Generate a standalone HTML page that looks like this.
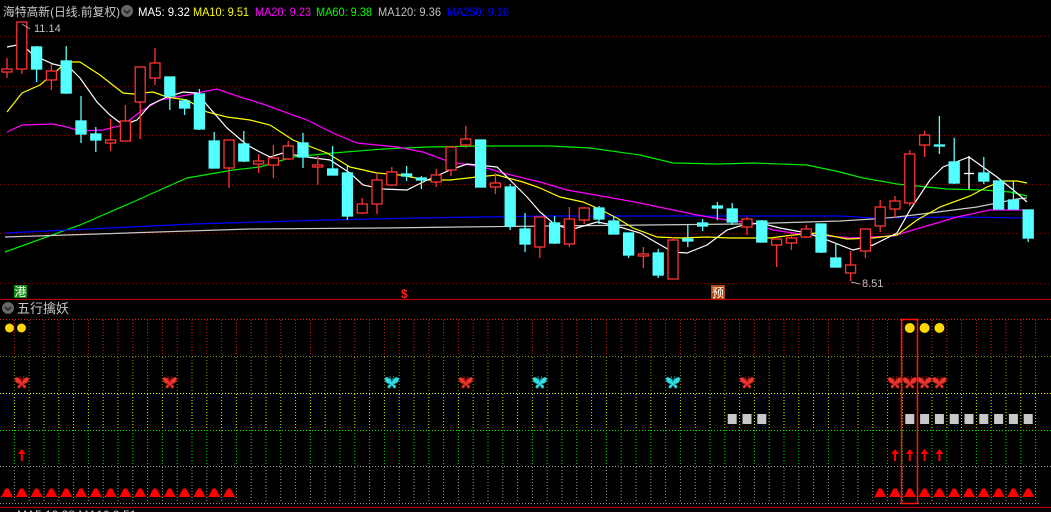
<!DOCTYPE html>
<html><head><meta charset="utf-8"><style>
html,body{margin:0;padding:0;background:#000;width:1051px;height:512px;overflow:hidden}
svg{display:block}
text{font-family:"Liberation Sans","Noto Sans CJK SC",sans-serif}
</style></head><body>
<svg width="1051" height="512" viewBox="0 0 1051 512" xmlns="http://www.w3.org/2000/svg">
<defs>
<g id="bfr"><path d="M0,-1 C-2,-6 -7,-7 -7,-4 C-7,-1 -4,1 -1,1 C-5,2 -5,6 -2,5 L0,2 L2,5 C5,6 5,2 1,1 C4,1 7,-1 7,-4 C7,-7 2,-6 0,-1Z" fill="#e8392e" stroke="#a01010" stroke-width="0.6"/><path d="M0,-1 L-2,-7 M0,-1 L2,-7" stroke="#a01010" stroke-width="0.8"/></g>
<g id="bfc"><path d="M0,-1 C-2,-6 -7,-7 -7,-4 C-7,-1 -4,1 -1,1 C-5,2 -5,6 -2,5 L0,2 L2,5 C5,6 5,2 1,1 C4,1 7,-1 7,-4 C7,-7 2,-6 0,-1Z" fill="#33dde6" stroke="#149aa0" stroke-width="0.6"/><path d="M0,-1 L-2,-7 M0,-1 L2,-7" stroke="#149aa0" stroke-width="0.8"/></g>
<polygon id="tri" points="-6,4 -1.5,-4.5 1.5,-4.5 6,4" fill="#ff0000"/>
<g id="arr"><path d="M0,-7 L-4,-2 L-1,-2 L-1,5 L1,5 L1,-2 L4,-2Z" fill="#ff0000"/></g>
<path id="vp" fill="none" d="M14.4,320V356M29.2,320V356M44,320V356M58.8,320V356M73.6,320V356M88.4,320V356M103.2,320V356M118,320V356M132.8,320V356M147.6,320V356M162.4,320V356M177.2,320V356M192,320V356M206.8,320V356M221.6,320V356M236.4,320V356M251.2,320V356M266,320V356M280.8,320V356M295.6,320V356M310.4,320V356M325.2,320V356M340,320V356M354.8,320V356M369.6,320V356M384.4,320V356M399.2,320V356M414,320V356M428.8,320V356M443.6,320V356M458.4,320V356M473.2,320V356M488,320V356M502.8,320V356M517.6,320V356M532.4,320V356M547.2,320V356M562,320V356M576.8,320V356M591.6,320V356M606.4,320V356M621.2,320V356M636,320V356M650.8,320V356M665.6,320V356M680.4,320V356M695.2,320V356M710,320V356M724.8,320V356M739.6,320V356M754.4,320V356M769.2,320V356M784,320V356M798.8,320V356M813.6,320V356M828.4,320V356M843.2,320V356M858,320V356M872.8,320V356M887.6,320V356M902.4,320V356M917.2,320V356M932,320V356M946.8,320V356M961.6,320V356M976.4,320V356M991.2,320V356M1006,320V356M1020.8,320V356M1035.6,320V356"/>
</defs>

<!-- header -->
<text x="3" y="16" font-size="12" fill="#c8c8c8" textLength="117" lengthAdjust="spacingAndGlyphs">海特高新(日线.前复权)</text>
<circle cx="127" cy="11" r="6" fill="#666"/>
<path d="M124,10 L127,13 L130,10" stroke="#222" stroke-width="1.5" fill="none"/>
<text x="138" y="16" font-size="12" fill="#ffffff" textLength="52" lengthAdjust="spacingAndGlyphs">MA5: 9.32</text>
<text x="193" y="16" font-size="12" fill="#ffff00" textLength="56" lengthAdjust="spacingAndGlyphs">MA10: 9.51</text>
<text x="255" y="16" font-size="12" fill="#ff00ff" textLength="56" lengthAdjust="spacingAndGlyphs">MA20: 9.23</text>
<text x="316" y="16" font-size="12" fill="#00ff00" textLength="56" lengthAdjust="spacingAndGlyphs">MA60: 9.38</text>
<text x="378" y="16" font-size="12" fill="#c0c0c0" textLength="63" lengthAdjust="spacingAndGlyphs">MA120: 9.36</text>
<text x="447" y="16" font-size="12" fill="#0000ff" textLength="62" lengthAdjust="spacingAndGlyphs">MA250: 9.16</text>

<!-- main grid -->
<g stroke="#8a0000" stroke-width="1" stroke-dasharray="1,3">
<line x1="0" y1="36.5" x2="1051" y2="36.5"/><line x1="0" y1="86.5" x2="1051" y2="86.5"/>
<line x1="0" y1="135.5" x2="1051" y2="135.5"/><line x1="0" y1="184.5" x2="1051" y2="184.5"/>
<line x1="0" y1="233.5" x2="1051" y2="233.5"/><line x1="0" y1="283.5" x2="1051" y2="283.5"/>
</g>

<!-- MA lines -->
<g fill="none" stroke-width="1.2">
<polyline stroke="#00ee00" points="5,252 80,225 133,202 187,178 233,170 260,167 293,157 333,153 383,149 427,147 483,146 550,146 590,148 640,155 673,163 720,164 753,163 807,165 840,172 863,178 897,184 947,189 983,190 1010,192 1027,196"/>
<polyline stroke="#0000ff" points="5,233 193,224 260,222 327,220 417,218 550,216 840,216 873,218 957,217 1027,218"/>
<polyline stroke="#c8c8c8" points="5,237 250,229 383,228 460,227 550,226 740,224 840,221 873,219 897,217 930,213 977,207 1017,199 1027,198"/>
<polyline stroke="#ff00ff" points="7,132 22,125 53,124 67,127 80,131 103,130 123,125 140,112 160,100 187,95 217,89 240,97 260,103 307,120 333,133 357,143 397,147 423,152 450,162 483,167 503,173 540,182 567,190 607,197 640,203 673,210 697,215 727,220 753,223 773,230 800,234 840,237 850,238 893,236 913,230 937,223 957,217 990,210 1027,210"/>
<polyline stroke="#ffff00" points="7,112 22,93 40,85 67,62 80,62 100,75 123,93 133,94 153,92 167,97 187,100 207,112 227,117 250,120 270,125 293,140 327,153 350,167 377,173 400,175 427,180 450,180 477,177 497,175 523,182 540,188 560,197 583,202 597,208 617,218 633,228 657,237 680,238 707,237 730,238 770,238 793,235 817,233 847,239 873,238 897,235 917,220 940,207 970,196 987,187 1003,181 1017,181 1027,183"/>
<polyline stroke="#ffffff" points="7,47 22,44 33,55 53,64 70,68 80,78 97,102 110,115 123,125 137,120 150,105 167,97 183,92 197,93 207,105 227,128 247,145 260,152 270,157 283,153 307,157 330,160 350,173 363,185 383,189 407,190 423,182 450,170 467,164 497,167 513,183 527,197 540,212 553,223 570,230 597,222 613,225 640,233 657,243 673,252 687,253 707,245 727,230 743,225 760,223 780,228 807,233 827,240 853,250 873,245 897,233 910,210 930,180 943,167 969,157 997,177 1017,193 1027,202"/>
</g>

<!-- candles -->
<g stroke-width="1.3">
<g stroke="#ff3333" fill="#000">
<line x1="7" y1="58" x2="7" y2="78"/><rect x="2" y="69" width="10" height="3"/>
<line x1="21.8" y1="22" x2="21.8" y2="74"/><rect x="16.8" y="22" width="10" height="47"/>
<line x1="51.4" y1="64" x2="51.4" y2="90"/><rect x="46.4" y="71" width="10" height="9"/>
<line x1="110.6" y1="119" x2="110.6" y2="151"/><rect x="105.6" y="140" width="10" height="3"/>
<line x1="125.4" y1="105" x2="125.4" y2="141"/><rect x="120.4" y="121" width="10" height="20"/>
<line x1="140.2" y1="67" x2="140.2" y2="139"/><rect x="135.2" y="67" width="10" height="35"/>
<line x1="155" y1="48" x2="155" y2="85"/><rect x="150" y="63" width="10" height="15"/>
<line x1="229" y1="140" x2="229" y2="188"/><rect x="224" y="140" width="10" height="28"/>
<line x1="258.6" y1="154" x2="258.6" y2="173"/><rect x="253.6" y="161" width="10" height="3"/>
<line x1="273.4" y1="145" x2="273.4" y2="178"/><rect x="268.4" y="158" width="10" height="7"/>
<line x1="288.2" y1="141" x2="288.2" y2="160"/><rect x="283.2" y="146" width="10" height="13"/>
<line x1="317.8" y1="156" x2="317.8" y2="185"/><rect x="312.8" y="165" width="10" height="2"/>
<line x1="362.2" y1="198" x2="362.2" y2="214"/><rect x="357.2" y="204" width="10" height="9"/>
<line x1="377" y1="173" x2="377" y2="214"/><rect x="372" y="180" width="10" height="24"/>
<line x1="391.8" y1="167" x2="391.8" y2="186"/><rect x="386.8" y="172" width="10" height="13"/>
<line x1="436.2" y1="169" x2="436.2" y2="187"/><rect x="431.2" y="175" width="10" height="7"/>
<line x1="451" y1="147" x2="451" y2="176"/><rect x="446" y="147" width="10" height="23"/>
<line x1="465.8" y1="126" x2="465.8" y2="148"/><rect x="460.8" y="139" width="10" height="6"/>
<line x1="495.4" y1="173" x2="495.4" y2="194"/><rect x="490.4" y="183" width="10" height="4"/>
<line x1="539.8" y1="217" x2="539.8" y2="258"/><rect x="534.8" y="217" width="10" height="30"/>
<line x1="569.4" y1="207" x2="569.4" y2="247"/><rect x="564.4" y="219" width="10" height="25"/>
<line x1="584.2" y1="207" x2="584.2" y2="224"/><rect x="579.2" y="208" width="10" height="12"/>
<line x1="643.4" y1="247" x2="643.4" y2="268"/><rect x="638.4" y="254" width="10" height="2"/>
<line x1="673" y1="237" x2="673" y2="279"/><rect x="668" y="240" width="10" height="39"/>
<line x1="747" y1="217" x2="747" y2="235"/><rect x="742" y="219" width="10" height="8"/>
<line x1="776.6" y1="239" x2="776.6" y2="267"/><rect x="771.6" y="239" width="10" height="6"/>
<line x1="791.4" y1="232" x2="791.4" y2="250"/><rect x="786.4" y="238" width="10" height="5"/>
<line x1="806.2" y1="225" x2="806.2" y2="238"/><rect x="801.2" y="229" width="10" height="8"/>
<line x1="850.6" y1="251" x2="850.6" y2="281"/><rect x="845.6" y="265" width="10" height="8"/>
<line x1="865.4" y1="229" x2="865.4" y2="258"/><rect x="860.4" y="229" width="10" height="22"/>
<line x1="880.2" y1="200" x2="880.2" y2="232"/><rect x="875.2" y="207" width="10" height="19"/>
<line x1="895" y1="196" x2="895" y2="218"/><rect x="890" y="201" width="10" height="8"/>
<line x1="909.8" y1="150" x2="909.8" y2="206"/><rect x="904.8" y="154" width="10" height="49"/>
<line x1="924.6" y1="131" x2="924.6" y2="157"/><rect x="919.6" y="135" width="10" height="10"/>
</g>
<g stroke="#54ffff" fill="#54ffff">
<line x1="36.6" y1="46" x2="36.6" y2="82"/><rect x="31.6" y="47" width="10" height="22"/>
<line x1="66.2" y1="46" x2="66.2" y2="94"/><rect x="61.2" y="61" width="10" height="32"/>
<line x1="81" y1="96" x2="81" y2="143"/><rect x="76" y="121" width="10" height="13"/>
<line x1="95.8" y1="127" x2="95.8" y2="152"/><rect x="90.8" y="134" width="10" height="6"/>
<line x1="169.8" y1="77" x2="169.8" y2="110"/><rect x="164.8" y="77" width="10" height="19"/>
<line x1="184.6" y1="99" x2="184.6" y2="115"/><rect x="179.6" y="101" width="10" height="7"/>
<line x1="199.4" y1="89" x2="199.4" y2="130"/><rect x="194.4" y="94" width="10" height="35"/>
<line x1="214.2" y1="132" x2="214.2" y2="168"/><rect x="209.2" y="141" width="10" height="27"/>
<line x1="243.8" y1="131" x2="243.8" y2="162"/><rect x="238.8" y="144" width="10" height="17"/>
<line x1="303" y1="133" x2="303" y2="168"/><rect x="298" y="143" width="10" height="14"/>
<line x1="332.6" y1="146" x2="332.6" y2="175"/><rect x="327.6" y="169" width="10" height="6"/>
<line x1="347.4" y1="165" x2="347.4" y2="220"/><rect x="342.4" y="173" width="10" height="43"/>
<line x1="406.6" y1="166" x2="406.6" y2="181"/><rect x="401.6" y="174" width="10" height="2"/>
<line x1="421.4" y1="176" x2="421.4" y2="189"/><rect x="416.4" y="178" width="10" height="2"/>
<rect x="475.6" y="140" width="10" height="47"/>
<line x1="510.2" y1="184" x2="510.2" y2="230"/><rect x="505.2" y="187" width="10" height="39"/>
<line x1="525" y1="213" x2="525" y2="252"/><rect x="520" y="229" width="10" height="15"/>
<line x1="554.6" y1="216" x2="554.6" y2="244"/><rect x="549.6" y="223" width="10" height="20"/>
<line x1="599" y1="206" x2="599" y2="224"/><rect x="594" y="208" width="10" height="11"/>
<line x1="613.8" y1="216" x2="613.8" y2="234"/><rect x="608.8" y="221" width="10" height="13"/>
<line x1="628.6" y1="233" x2="628.6" y2="258"/><rect x="623.6" y="233" width="10" height="22"/>
<line x1="658.2" y1="249" x2="658.2" y2="278"/><rect x="653.2" y="253" width="10" height="22"/>
<line x1="687.8" y1="225" x2="687.8" y2="247"/><rect x="682.8" y="239" width="10" height="2"/>
<line x1="702.6" y1="219" x2="702.6" y2="231"/><rect x="697.6" y="223" width="10" height="3"/>
<line x1="717.4" y1="202" x2="717.4" y2="220"/><rect x="712.4" y="206" width="10" height="2"/>
<line x1="732.2" y1="203" x2="732.2" y2="225"/><rect x="727.2" y="209" width="10" height="13"/>
<line x1="761.8" y1="220" x2="761.8" y2="242"/><rect x="756.8" y="221" width="10" height="21"/>
<line x1="821" y1="224" x2="821" y2="253"/><rect x="816" y="224" width="10" height="28"/>
<line x1="835.8" y1="243" x2="835.8" y2="267"/><rect x="830.8" y="258" width="10" height="9"/>
<line x1="939.4" y1="116" x2="939.4" y2="154"/><rect x="934.4" y="145" width="10" height="1"/>
<line x1="954.2" y1="138" x2="954.2" y2="184"/><rect x="949.2" y="162" width="10" height="21"/>
<line x1="983.8" y1="157" x2="983.8" y2="184"/><rect x="978.8" y="173" width="10" height="8"/>
<rect x="993.6" y="181" width="10" height="28"/>
<line x1="1013.4" y1="181" x2="1013.4" y2="209"/><rect x="1008.4" y="200" width="10" height="9"/>
<line x1="1028.2" y1="210" x2="1028.2" y2="242"/><rect x="1023.2" y="210" width="10" height="28"/>
</g>
<g stroke="#ffffff"><line x1="969" y1="156" x2="969" y2="189"/><line x1="964" y1="173.5" x2="974" y2="173.5"/></g>
</g>

<!-- labels -->
<path d="M22,24 L30,29" stroke="#aaa" stroke-width="1"/>
<text x="34" y="32" font-size="11" fill="#c0c0c0">11.14</text>
<path d="M851,282 L860,284" stroke="#aaa" stroke-width="1"/>
<text x="862" y="287" font-size="11" fill="#c0c0c0">8.51</text>
<rect x="14" y="285" width="13" height="13" fill="#0a8a0a"/>
<text x="14.5" y="296" font-size="12" fill="#fff">港</text>
<text x="401" y="298" font-size="12" fill="#ff2020" font-weight="bold">$</text>
<rect x="711" y="285" width="14" height="14" fill="#b04a10"/>
<text x="712" y="297" font-size="12" fill="#fff">预</text>

<line x1="0" y1="299.5" x2="1051" y2="299.5" stroke="#b00000" stroke-width="1.2"/>

<!-- lower panel -->
<circle cx="8" cy="308" r="6" fill="#666"/>
<path d="M5,307 L8,310 L11,307" stroke="#222" stroke-width="1.5" fill="none"/>
<text x="17" y="313" font-size="13" fill="#c8c8c8">五行擒妖</text>

<g stroke-width="1" stroke-dasharray="1,2">
<line x1="0" y1="319.5" x2="1051" y2="319.5" stroke="#e02020"/>
<line x1="0" y1="356.5" x2="1051" y2="356.5" stroke="#8a8a00"/>
<line x1="0" y1="393.5" x2="1051" y2="393.5" stroke="#ffff00"/>
<line x1="0" y1="430.5" x2="1051" y2="430.5" stroke="#00ee00"/>
<line x1="0" y1="466.5" x2="1051" y2="466.5" stroke="#999"/>
<line x1="0" y1="503.5" x2="1040" y2="503.5" stroke="#999"/>
</g>
<g stroke-width="1" stroke-dasharray="1,2" fill="none">
<use href="#vp" stroke="#d02020"/>
<use href="#vp" stroke="#8a8a00" transform="translate(0,37)"/>
<use href="#vp" stroke="#e8e800" transform="translate(0,74)"/>
<use href="#vp" stroke="#00dd00" transform="translate(0,110)"/>
<use href="#vp" stroke="#999999" transform="translate(0,147)"/>
</g>

<!-- circles -->
<g fill="#ffd800">
<circle cx="9.5" cy="328" r="4.5"/><circle cx="21.5" cy="328" r="4.5"/>
<circle cx="909.8" cy="328" r="5"/><circle cx="924.6" cy="328" r="5"/><circle cx="939.4" cy="328" r="5"/>
</g>
<!-- butterflies -->
<use href="#bfr" x="21.8" y="383"/><use href="#bfr" x="169.8" y="383"/>
<use href="#bfc" x="391.8" y="383"/><use href="#bfr" x="465.8" y="383"/>
<use href="#bfc" x="539.8" y="383"/><use href="#bfc" x="673" y="383"/>
<use href="#bfr" x="747" y="383"/>
<use href="#bfr" x="895" y="383"/><use href="#bfr" x="909.8" y="383"/><use href="#bfr" x="924.6" y="383"/><use href="#bfr" x="939.4" y="383"/>
<!-- squares -->
<g fill="#c8c8c8">
<rect x="727.7" y="414" width="9" height="10"/><rect x="742.5" y="414" width="9" height="10"/><rect x="757.3" y="414" width="9" height="10"/>
<rect x="905.3" y="414" width="9" height="10"/><rect x="920.1" y="414" width="9" height="10"/><rect x="934.9" y="414" width="9" height="10"/><rect x="949.7" y="414" width="9" height="10"/><rect x="964.5" y="414" width="9" height="10"/><rect x="979.3" y="414" width="9" height="10"/><rect x="994.1" y="414" width="9" height="10"/><rect x="1008.9" y="414" width="9" height="10"/><rect x="1023.7" y="414" width="9" height="10"/>
</g>
<!-- arrows -->
<use href="#arr" x="21.8" y="456"/>
<use href="#arr" x="895" y="456"/><use href="#arr" x="909.8" y="456"/><use href="#arr" x="924.6" y="456"/><use href="#arr" x="939.4" y="456"/>
<!-- triangles -->
<use href="#tri" x="7" y="493"/><use href="#tri" x="21.8" y="493"/><use href="#tri" x="36.6" y="493"/><use href="#tri" x="51.4" y="493"/><use href="#tri" x="66.2" y="493"/><use href="#tri" x="81" y="493"/><use href="#tri" x="95.8" y="493"/><use href="#tri" x="110.6" y="493"/><use href="#tri" x="125.4" y="493"/><use href="#tri" x="140.2" y="493"/><use href="#tri" x="155" y="493"/><use href="#tri" x="169.8" y="493"/><use href="#tri" x="184.6" y="493"/><use href="#tri" x="199.4" y="493"/><use href="#tri" x="214.2" y="493"/><use href="#tri" x="229" y="493"/>
<use href="#tri" x="880.2" y="493"/><use href="#tri" x="895" y="493"/><use href="#tri" x="909.8" y="493"/><use href="#tri" x="924.6" y="493"/><use href="#tri" x="939.4" y="493"/><use href="#tri" x="954.2" y="493"/><use href="#tri" x="969" y="493"/><use href="#tri" x="983.8" y="493"/><use href="#tri" x="998.6" y="493"/><use href="#tri" x="1013.4" y="493"/><use href="#tri" x="1028.2" y="493"/>
<!-- selection box -->
<rect x="901.5" y="319.5" width="16" height="184" fill="none" stroke="#ff1010" stroke-width="1.5"/>

<line x1="0" y1="507.5" x2="1051" y2="507.5" stroke="#b00000" stroke-width="1.2"/>
<text x="17" y="519" font-size="12" fill="#c8c8c8">MA5:10.38 MA10:9.51</text>
</svg>
</body></html>
